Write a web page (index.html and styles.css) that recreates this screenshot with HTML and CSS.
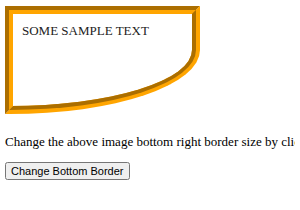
FILE: index.html
```html
<!DOCTYPE html>
<html>
<head>
  <meta charset="UTF-8" />
  <title>Border Bottom Right Radius</title>
  <link rel="stylesheet" href="styles.css">
</head>
<body>
  <div id="box">SOME SAMPLE TEXT</div>
  <p>Change the above image bottom right border size by clicking the button below.</p>
  <button onclick="changeBorder()">Change Bottom Border</button>
  <script>
    function changeBorder() {
      document.getElementById('box').style.borderBottomRightRadius = '25px';
    }
  </script>
</body>
</html>
```

FILE: styles.css
```css
body {
  margin: 6px 5px;
  font-family: "Liberation Serif", "Times New Roman", serif;
  font-size: 13px;
  white-space: nowrap;
  overflow: hidden;
}
#box {
  box-sizing: border-box;
  width: 195px;
  height: 108px;
  padding: 9px;
  border: 8px groove orange;
  border-bottom-right-radius: 190px 64px;
  color: #222;
}
p { margin: 20px 0 12px; }
button {
  font-family: "Liberation Sans", Arial, sans-serif;
  font-size: 11px;
  padding: 1px 4px;
  height: 18px;
}
```
